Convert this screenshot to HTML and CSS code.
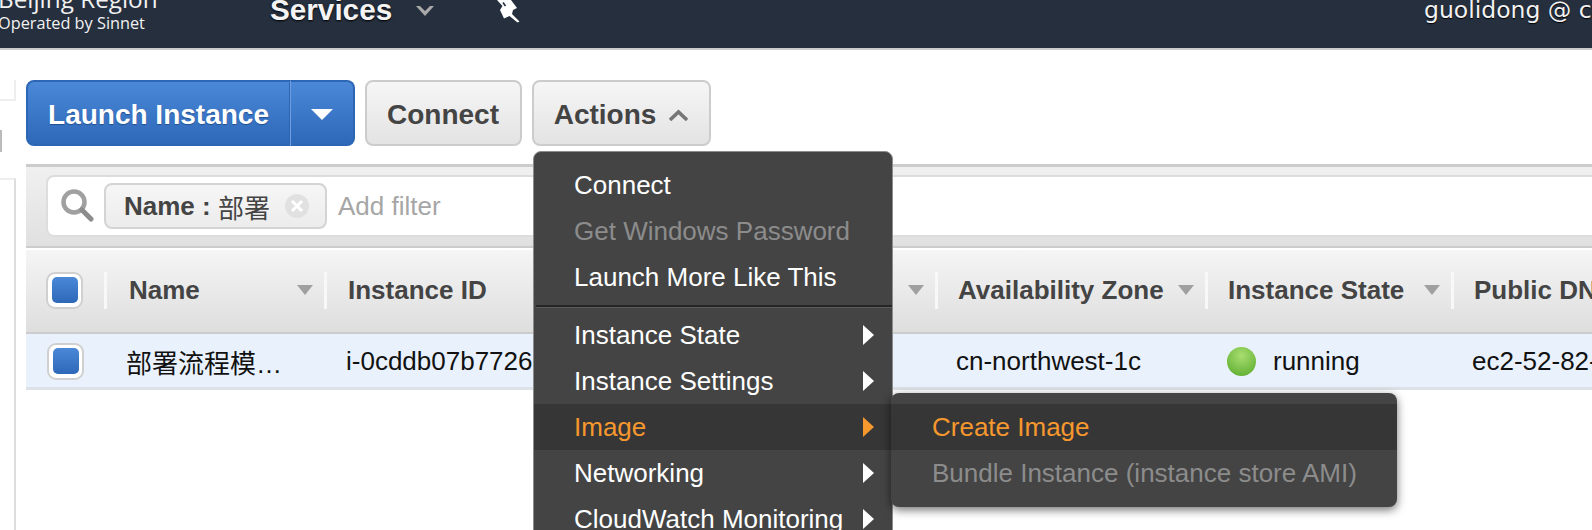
FILE: index.html
```html
<!DOCTYPE html>
<html lang="en">
<head>
  <meta charset="UTF-8" />
  <title>EC2 Instances</title>
  <link rel="stylesheet" href="styles.css">
</head>
<body>
  <header class="topbar">
    <div class="brand">
      <div class="brand-region">Beijing Region</div>
      <div class="brand-sub">Operated by Sinnet</div>
    </div>
    <div class="services">Services</div>
    <svg class="chevron" viewBox="0 0 18 10"><path d="M0 0 L4 0 L9 5 L14 0 L18 0 L9 10 Z" /></svg>
    <svg class="pin" viewBox="0 0 40 26">
      <path d="M7 0 H21 L27 8 L23 10 L22 14 L29.5 21.5 L27.5 22.5 L19.5 16 L14 18.5 L10 10 L12.5 6 Z" fill="#fff" />
      <path d="M13 2.5 L15.5 6" stroke="#252f3e" stroke-width="1.6" />
    </svg>
    <div class="account">guolidong @ c</div>
  </header>

  <div class="page">
    <aside class="sidenav">
      <div class="nav-top"></div>
      <div class="nav-mark"></div>
      <div class="nav-rest"></div>
    </aside>

    <main class="content">
      <div class="toolbar">
        <div class="btn-split">
          <button class="btn-primary btn-launch">Launch Instance</button>
          <button class="btn-primary btn-caret"><span class="caret-down"></span></button>
        </div>
        <button class="btn btn-connect">Connect</button>
        <div class="actions">
          <button class="btn">Actions<svg class="caret-up" viewBox="0 0 19 12"><path d="M1 11 L9.5 3 L18 11" fill="none" stroke="#767676" stroke-width="3.5" /></svg></button>
          <ul class="menu">
            <li class="menu-item">Connect</li>
            <li class="menu-item disabled">Get Windows Password</li>
            <li class="menu-item">Launch More Like This</li>
            <li class="menu-sep"></li>
            <li class="menu-item has-sub">Instance State</li>
            <li class="menu-item has-sub">Instance Settings</li>
            <li class="menu-item has-sub active">Image
              <ul class="menu submenu">
                <li class="menu-item active">Create Image</li>
                <li class="menu-item disabled">Bundle Instance (instance store AMI)</li>
              </ul>
            </li>
            <li class="menu-item has-sub">Networking</li>
            <li class="menu-item has-sub">CloudWatch Monitoring</li>
          </ul>
        </div>
      </div>

      <div class="filter-bar">
        <div class="filter-box">
          <svg class="search-icon" viewBox="0 0 34 34">
            <circle cx="14" cy="13" r="10.5" fill="none" stroke="#a0a0a0" stroke-width="4.5" />
            <path d="M22 21 L31 30" stroke="#8c8c8c" stroke-width="5" stroke-linecap="round" />
          </svg>
          <div class="filter-tag">
            <b>Name :</b>&nbsp;部署
            <svg class="tag-close" viewBox="0 0 24 24">
              <circle cx="12" cy="12" r="12" fill="#e1e1e1" />
              <path d="M7 7 L17 17 M17 7 L7 17" stroke="#fff" stroke-width="3" />
            </svg>
          </div>
          <div class="filter-hint">Add filter</div>
        </div>
      </div>

      <div class="table">
        <div class="thead">
          <div class="th th-check"><span class="check"></span></div>
          <div class="th th-name">Name<i class="sort"></i></div>
          <div class="th th-id">Instance ID<i class="sort"></i></div>
          <div class="th">Instance Type<i class="sort"></i></div>
          <div class="th">Availability Zone<i class="sort"></i></div>
          <div class="th">Instance State<i class="sort"></i></div>
          <div class="th th-last">Public DNS (IPv4)</div>
        </div>
        <div class="trow">
          <div class="td td-check"><span class="check"></span></div>
          <div class="td">部署流程模…</div>
          <div class="td">i-0cddb07b77260</div>
          <div class="td"></div>
          <div class="td td-tight">cn-northwest-1c</div>
          <div class="td"><span class="dot"></span>running</div>
          <div class="td td-tight">ec2-52-82-1-1.cn-northwest-1</div>
        </div>
      </div>
    </main>
  </div>
</body>
</html>
```

FILE: styles.css
```css
* {
  box-sizing: border-box;
}

html, body {
  margin: 0;
  height: 530px;
  overflow: hidden;
}

body {
  font-family: "Liberation Sans", Arial, sans-serif;
  font-size: 26px;
  background: #fff;
  color: #111;
}

/* top bar */
.topbar {
  height: 50px;
  background: #252f3e;
  border-bottom: 2px solid #ccc;
  color: #f2f2f2;
  display: flex;
  align-items: flex-start;
  overflow: hidden;
  white-space: nowrap;
}

.brand {
  width: 272px;
  margin-top: -13px;
  margin-left: -2px;
  flex-shrink: 0;
  font-family: "Open Sans", sans-serif;
  font-size: 16.3px;
  line-height: 24px;
}

.brand-region {
  height: 24px;
  font-size: 24.3px;
}

.services {
  font-weight: bold;
  font-size: 29.7px;
  line-height: 20px;
  text-shadow: 0 1px 2px #000;
  color: #f4f4f4;
}

.chevron {
  width: 18px;
  height: 10px;
  margin: 6px 0 0 24px;
  fill: #a9a9a9;
}

.pin {
  width: 40px;
  height: 26px;
  margin-left: 56px;
}

.account {
  margin-left: auto;
  margin-top: -5px;
  width: 168px;
  font-family: "DejaVu Sans", sans-serif;
  font-size: 23.5px;
  line-height: 30px;
  text-shadow: 0 1px 1px #000;
  overflow: hidden;
}

/* layout */
.page {
  display: flex;
  height: 480px;
}

.sidenav {
  width: 26px;
  flex-shrink: 0;
  padding-top: 30px;
}

.nav-top {
  width: 16px;
  height: 21px;
  border-right: 2px solid #eee;
  border-bottom: 2px solid #eee;
}

.nav-mark {
  width: 2px;
  height: 22px;
  margin-top: 29px;
  background: #bbb;
}

.nav-rest {
  width: 16px;
  height: 400px;
  margin-top: 26px;
  border-top: 2px solid #eee;
  border-right: 2px solid #ddd;
}

.content {
  flex: 1;
  min-width: 0;
  padding-top: 30px;
}

/* buttons */
.toolbar {
  display: flex;
  height: 66px;
  margin-bottom: 18px;
}

button {
  font-family: inherit;
  font-size: 28px;
  font-weight: bold;
  padding-top: 3px;
  cursor: pointer;
}

.btn-split {
  display: flex;
  width: 329px;
  margin-right: 10px;
}

.btn-primary {
  height: 66px;
  color: #fff;
  border: 2px solid #2c66b5;
  background: linear-gradient(#4b88d8, #2e68b8);
  text-shadow: 0 1px 1px #234f8f;
}

.btn-launch {
  width: 264px;
  padding: 3px 0 0;
  border-right: 1px solid #2c66b5;
  border-radius: 8px 0 0 8px;
}

.btn-caret {
  flex: 1;
  padding: 0;
  border-left: 1px solid #6d9de0;
  border-radius: 0 8px 8px 0;
}

.caret-down {
  display: inline-block;
  border-top: 11px solid #fff;
  border-left: 11px solid transparent;
  border-right: 11px solid transparent;
  vertical-align: middle;
}

.btn {
  height: 66px;
  padding: 3px 20px 0;
  color: #444;
  border: 2px solid #ccc;
  border-radius: 8px;
  background: linear-gradient(#f6f6f6, #e3e3e3);
}

.btn-connect {
  padding-right: 21px;
}

.actions {
  position: relative;
  margin-left: 10px;
}

.actions .btn {
  width: 179px;
  padding: 3px 1px 0 0;
}

.caret-up {
  width: 19px;
  height: 12px;
  margin-left: 13px;
  vertical-align: 3px;
}

/* dropdown */
.menu {
  position: absolute;
  top: 71px;
  left: 1px;
  z-index: 5;
  width: 360px;
  margin: 0;
  padding: 10px 0 11px;
  list-style: none;
  background: #444;
  border-radius: 8px;
  border: 1px solid #8c8c8c;
  font-size: 26px;
  font-weight: normal;
  color: #fff;
}

.menu-item {
  position: relative;
  height: 46px;
  line-height: 46px;
  padding-left: 40px;
  white-space: nowrap;
}

.menu-item.disabled {
  color: #8c8c8c;
}

.menu-item.active {
  background: #363636;
  color: #f7982e;
}

.has-sub::after {
  content: "";
  position: absolute;
  right: 18px;
  top: 13px;
  border-left: 11px solid #fff;
  border-top: 10px solid transparent;
  border-bottom: 10px solid transparent;
}

.has-sub.active::after {
  border-left-color: #f7982e;
}

.menu-sep {
  height: 3px;
  margin: 5px 0 4px 2px;
  background: #262626;
  border-bottom: 1px solid #5a5a5a;
}

.submenu {
  top: -11px;
  left: 357px;
  width: 506px;
  height: 114px;
  padding-top: 11px;
  border: none;
  box-shadow: 0 3px 10px rgba(0, 0, 0, 0.55);
}

.submenu .menu-item {
  padding-left: 41px;
}

/* filter */
.filter-bar {
  height: 84px;
  padding: 8px 0 0 20px;
  border-top: 3px solid #ccc;
  border-bottom: 2px solid #ccc;
  background: linear-gradient(#f0f0f0, #e0e0e0);
}

.filter-box {
  display: flex;
  align-items: center;
  height: 62px;
  margin-right: -20px;
  padding-left: 12px;
  background: #fff;
  border: 2px solid #ddd;
  border-radius: 8px;
}

.search-icon {
  width: 34px;
  height: 34px;
  margin-right: 10px;
}

.filter-tag {
  display: flex;
  align-items: center;
  width: 223px;
  height: 46px;
  padding-left: 18px;
  border: 2px solid #d4d4d4;
  border-radius: 8px;
  background: linear-gradient(#f6f6f6, #ececec);
  color: #444;
  font-family: "Liberation Sans", "Noto Sans CJK SC", sans-serif;
}

.tag-close {
  width: 24px;
  height: 24px;
  margin-left: 15px;
}

.filter-hint {
  margin-left: 11px;
  color: #a6a6a6;
}

/* table */
.table {
  margin-top: 2px;
}

.thead,
.trow {
  display: grid;
  grid-template-columns: 81px 220px 300px 311px 270px 246px 1fr;
  white-space: nowrap;
}

.thead {
  height: 84px;
  padding-bottom: 2px;
  align-items: center;
  border-bottom: 2px solid #ccc;
  background: linear-gradient(#f5f5f5, #dedede);
}

.th {
  display: flex;
  align-items: center;
  height: 37px;
  padding-left: 20px;
  padding-right: 11px;
  border-right: 3px solid #f8f8f8;
  font-weight: bold;
  color: #444;
}

.th-name {
  padding-left: 22px;
}

.th-id {
  padding-left: 21px;
}

.th-last {
  border-right: none;
}

.sort {
  margin-left: auto;
  border-top: 10px solid #a0a0a0;
  border-left: 8px solid transparent;
  border-right: 8px solid transparent;
}

.check {
  display: flex;
  align-items: center;
  justify-content: center;
  width: 37px;
  height: 37px;
  flex-shrink: 0;
  border: 2px solid #d0d0d0;
  border-radius: 9px;
  background: #fff;
}

.check::after {
  content: "";
  width: 26px;
  height: 26px;
  border-radius: 5px;
  background: linear-gradient(#4b88d8, #2e68b8);
}

.trow {
  height: 56px;
  padding-top: 1px;
  align-items: center;
  border-bottom: 3px solid #dde2e8;
  background: #e9f2fc;
}

.td {
  display: flex;
  align-items: center;
  padding-left: 19px;
  font-family: "Liberation Sans", "Noto Sans CJK SC", sans-serif;
  overflow: hidden;
}

.td-check {
  padding-left: 21px;
}

.td-tight {
  padding-left: 18px;
}

.dot {
  width: 29px;
  height: 29px;
  margin-right: 17px;
  border-radius: 50%;
  background: radial-gradient(circle at 50% 30%, #a8de70, #6ab53a 75%, #5aa52e);
}
```
